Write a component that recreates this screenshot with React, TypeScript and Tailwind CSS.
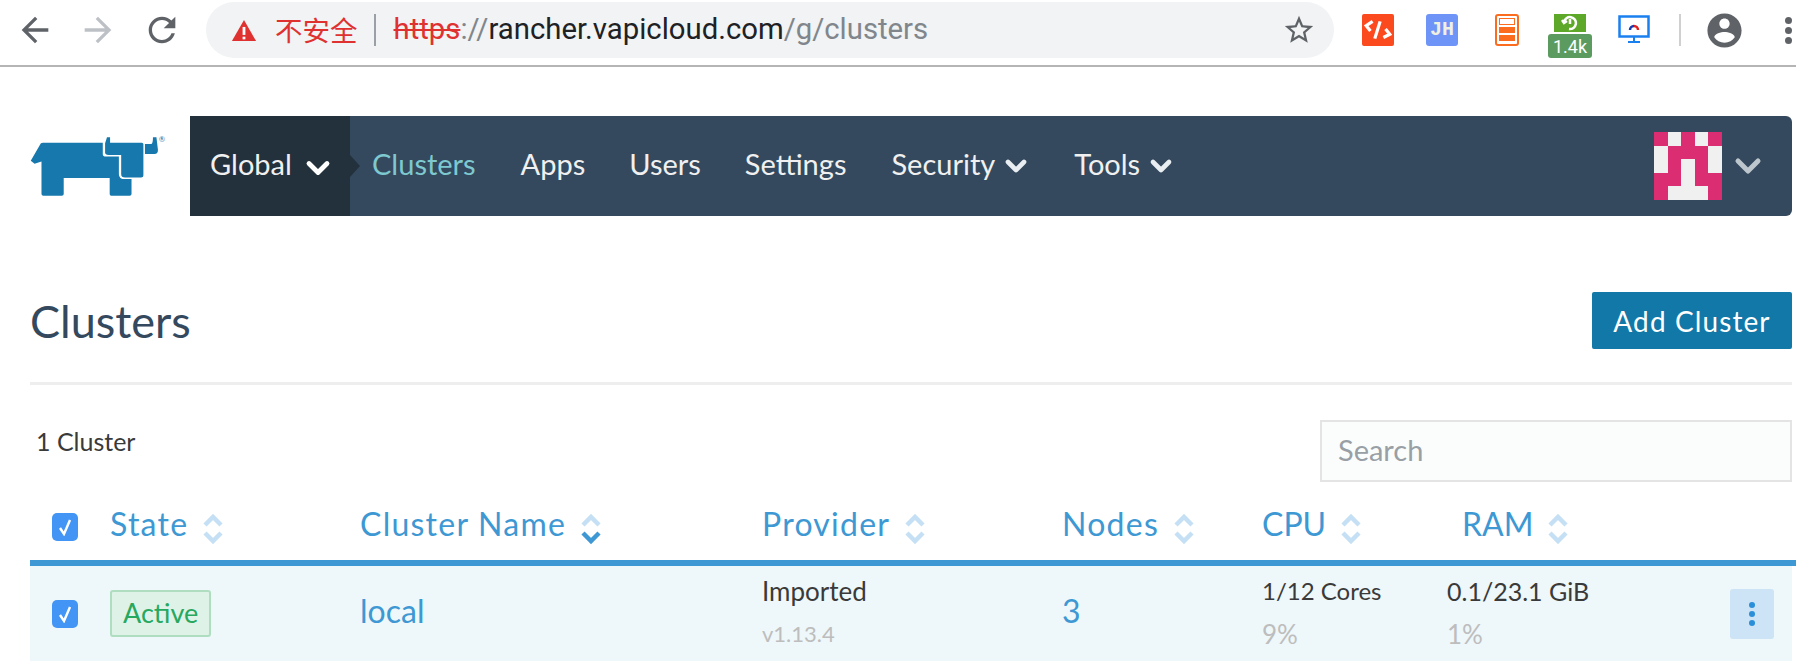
import { ChevronDown } from "lucide-react";

const font = "font-['Lato','Noto_Sans',sans-serif]";

function Sort({ active }: { active?: boolean }) {
  return (
    <svg width="20" height="32" viewBox="0 0 20 32" className="ml-[15px] mt-[3px]" fill="none" strokeWidth="4.5">
      <path d="M2 12 L10 4 L18 12" stroke="#c5e0f4" />
      <path d="M2 20 L10 28 L18 20" stroke={active ? "#3d98d3" : "#c5e0f4"} />
    </svg>
  );
}

function Check() {
  return (
    <div className="flex h-7 w-[26px] items-center justify-center rounded-[5px] bg-[#4295f5]">
      <svg width="15" height="18" viewBox="0 0 15 18" fill="none" stroke="#fff" strokeWidth="2.4">
        <path d="M2 10 L6 16 L12 2" />
      </svg>
    </div>
  );
}

function Head({ label, active, tight }: { label: string; active?: boolean; tight?: boolean }) {
  return (
    <div className={`flex h-[36px] items-center text-[32px] leading-[36px] text-[#3d98d3] ${tight ? "tracking-normal" : "tracking-[1.25px]"}`}>
      <span className="mb-[6px]">{label}</span>
      <Sort active={active} />
    </div>
  );
}

function Rancher() {
  return (
    <svg width="136" height="63" viewBox="80 110 355 190" preserveAspectRatio="none" fill="#1778ad">
      <path d="M82 188 L108 136 Q110 133 114 133 L270 133 L270 168 Q270 175 278 175 L312 175 L312 228 Q312 243 328 243 L345 243 L345 288 Q345 293 340 293 L292 293 Q288 293 288 288 L288 240 L168 240 L168 288 Q168 293 163 293 L115 293 Q110 293 110 288 L110 190 L92 197 Z" />
      <path d="M289 133 L372 133 Q376 133 376 138 L376 232 Q376 238 370 238 L328 238 Q318 238 318 228 L318 170 L285 170 Q276 170 276 163 L276 135 L281 117 L289 117 Z" />
      <path d="M380 137 L397 137 Q401 135 401 117 L410 117 L414 155 Q414 167 405 167 L380 167 Z" />
      <text x="416" y="132" fontSize="20">®</text>
    </svg>
  );
}

const cells = [
  1, 0, 1, 0, 1,
  0, 1, 1, 1, 0,
  0, 1, 0, 1, 0,
  1, 1, 0, 1, 1,
  1, 0, 0, 0, 1,
];

function Avatar() {
  return (
    <svg width="68" height="68" viewBox="0 0 5 5" shapeRendering="crispEdges">
      {cells.map((on, i) => (
        <rect key={i} x={i % 5} y={Math.floor(i / 5)} width="1" height="1" fill={on ? "#db2e72" : "#f0f0f0"} />
      ))}
    </svg>
  );
}

function Toolbar() {
  return (
    <div className="flex h-[67px] items-center border-b-2 border-[#b5b5b5] pb-[5px] font-['Roboto',sans-serif]">
      <svg width="40" height="40" viewBox="0 0 24 24" fill="#5f6368" className="ml-[15px] shrink-0">
        <path d="M20 11H7.83l5.59-5.59L12 4l-8 8 8 8 1.41-1.41L7.83 13H20v-2z" />
      </svg>
      <svg width="40" height="40" viewBox="0 0 24 24" fill="#bdc1c6" className="ml-[23px] shrink-0">
        <path d="M4 13h12.17l-5.59 5.59L12 20l8-8-8-8-1.41 1.41L16.17 11H4v2z" />
      </svg>
      <svg width="40" height="40" viewBox="0 0 24 24" fill="#5f6368" className="ml-[24px] shrink-0">
        <path d="M17.65 6.35C16.2 4.9 14.21 4 12 4c-4.42 0-7.99 3.58-7.99 8s3.57 8 7.99 8c3.73 0 6.84-2.55 7.73-6h-2.08c-.82 2.33-3.04 4-5.65 4-3.31 0-6-2.69-6-6s2.69-6 6-6c1.66 0 3.14.69 4.22 1.78L13 11h7V4l-2.35 2.35z" />
      </svg>
      <div className="ml-[24px] flex h-[56px] w-[1128px] shrink-0 items-center rounded-[28px] bg-[#f1f3f4] pl-[25px] pr-[18px] text-[29.3px]">
        <svg width="26" height="23" viewBox="0 0 28 26" preserveAspectRatio="none">
          <path d="M14 1 L27 25 L1 25 Z" fill="#e03131" />
          <rect x="12.5" y="9" width="3" height="9" fill="#fff" />
          <rect x="12.5" y="20" width="3" height="3" fill="#fff" />
        </svg>
        <span className="ml-[18px] font-['Noto_Sans_CJK_SC',sans-serif] text-[27.5px] text-[#e03131]">不安全</span>
        <span className="ml-[16px] h-[32px] w-[2px] bg-[#9aa0a6]" />
        <span className="ml-[18px] text-[#e03131] line-through">https</span>
        <span className="text-[#80868b]">://</span>
        <span className="text-[#202124]">rancher.vapicloud.com</span>
        <span className="text-[#80868b]">/g/clusters</span>
        <svg width="34" height="34" viewBox="0 0 24 24" fill="#5f6368" className="ml-auto">
          <path d="M22 9.24l-7.19-.62L12 2 9.19 8.63 2 9.24l5.46 4.73L5.82 21 12 17.27 18.18 21l-1.63-7.03L22 9.24zM12 15.4l-3.76 2.27 1-4.28-3.32-2.88 4.38-.38L12 6.1l1.71 4.04 4.38.38-3.32 2.88 1 4.28L12 15.4z" />
        </svg>
      </div>
      <div className="ml-[28px] flex h-8 w-8 shrink-0 items-center justify-center rounded-[2px] bg-[#fc4a1f]">
        <svg width="28" height="24" viewBox="0 0 26 22" fill="none" stroke="#fff" strokeWidth="3">
          <path d="M8 3 L2 7 L6 12 M10 19 L15 3 M20 10 L24 15 L18 18" />
        </svg>
      </div>
      <div className="ml-[32px] flex h-8 w-8 shrink-0 items-center justify-center rounded-[3px] bg-[#6f94f7] font-['Liberation_Mono',monospace] text-[20px] font-bold text-[#f0f0e0]">JH</div>
      <div className="ml-[37px] flex h-8 w-[24px] shrink-0 flex-col gap-[2px] rounded-[3px] border-2 border-[#fb6c1f] p-[2px]">
        <div className="h-[7px] border border-[#fb6c1f]" />
        <div className="h-[6px] bg-[#fb6c1f]" />
        <div className="h-[6px] bg-[#fb6c1f]" />
      </div>
      <div className="ml-[29px] flex w-[44px] shrink-0 flex-col items-center pt-[12px]">
        <div className="flex h-[18px] w-[32px] items-center justify-center bg-[#5ea829]">
          <svg width="18" height="18" viewBox="0 0 18 18" fill="none" stroke="#fff" strokeWidth="2.5">
            <path d="M3 8 A6 6 0 1 1 8 15 M1 6 L3 9 L6 7 M9 5 V10" />
          </svg>
        </div>
        <div className="mt-[2px] flex h-[24px] w-[44px] items-center justify-center rounded-[3px] bg-[#5c9b60] text-[18px] text-white">1.4k</div>
      </div>
      <svg width="32" height="32" viewBox="0 0 32 32" className="ml-[26px] shrink-0">
        <rect x="1.5" y="2.5" width="29" height="20" fill="#fff" stroke="#1a80f0" strokeWidth="2.5" />
        <path d="M12 16 A4 4 0 0 1 16 12" fill="none" stroke="#1a3ab0" strokeWidth="2.5" />
        <path d="M16 12 A4 4 0 0 1 20 16" fill="none" stroke="#e02020" strokeWidth="2.5" />
        <path d="M15 23 H17 V27 H22 V29 H10 V27 H15 Z" fill="#1a80f0" />
      </svg>
      <div className="ml-[29px] h-[32px] w-[2px] shrink-0 bg-[#d0d0d0]" />
      <svg width="41" height="41" viewBox="0 0 24 24" fill="#5f6368" className="ml-[23px] shrink-0">
        <path d="M12 2C6.48 2 2 6.48 2 12s4.48 10 10 10 10-4.48 10-10S17.52 2 12 2zm0 3c1.66 0 3 1.34 3 3s-1.34 3-3 3-3-1.34-3-3 1.34-3 3-3zm0 14.2c-2.5 0-4.71-1.28-6-3.22.03-1.99 4-3.08 6-3.08 1.99 0 5.97 1.09 6 3.08-1.29 1.94-3.5 3.22-6 3.22z" />
      </svg>
      <div className="ml-[40px] flex shrink-0 flex-col gap-[3px]">
        <div className="h-[7px] w-[7px] rounded-full bg-[#5f6368]" />
        <div className="h-[7px] w-[7px] rounded-full bg-[#5f6368]" />
        <div className="h-[7px] w-[7px] rounded-full bg-[#5f6368]" />
      </div>
    </div>
  );
}

function Nav() {
  return (
    <div className="mt-[49px] flex items-center pl-[30px] pr-[4px]">
      <div className="w-[160px] shrink-0">
        <Rancher />
      </div>
      <div className="flex h-[100px] flex-1 items-center rounded-r-[6px] bg-[#34495e] pr-[24px] text-[29px] text-[#f0f0f0]">
        <div className="relative flex h-full w-[160px] items-center bg-[#23313d] pb-[4px] pl-[20px]">
          Global
          <ChevronDown size={36} strokeWidth={3.2} className="ml-[8px] mt-[8px] text-white" />
          <div className="absolute left-full top-[39px] h-0 w-0 border-y-[11px] border-l-[10px] border-y-transparent border-l-[#23313d]" />
        </div>
        <span className="mb-[4px] ml-[22px] text-[#7ec8cf]">Clusters</span>
        <span className="mb-[4px] ml-[45px]">Apps</span>
        <span className="mb-[4px] ml-[44px]">Users</span>
        <span className="mb-[4px] ml-[44px]">Settings</span>
        <span className="mb-[4px] ml-[45px]">Security</span>
        <ChevronDown size={32} strokeWidth={3.5} className="ml-[5px] text-[#e8eef2]" />
        <span className="mb-[4px] ml-[42px]">Tools</span>
        <ChevronDown size={32} strokeWidth={3.5} className="ml-[5px] text-[#e8eef2]" />
        <div className="ml-auto flex items-center gap-[6px]">
          <Avatar />
          <ChevronDown size={40} strokeWidth={3} className="text-[#bcc6cc]" />
        </div>
      </div>
    </div>
  );
}

export default function App() {
  return (
    <div className={`h-[666px] w-[1796px] overflow-hidden bg-white ${font}`}>
      <Toolbar />
      <Nav />
      <div className="pl-[30px] pr-[4px]">
        <div className="mt-[76px] flex h-[93px] items-start justify-between border-b-[3px] border-[#eeeeee]">
          <h1 className="mt-[9px] text-[45px] leading-[40px] text-[#34495e]">Clusters</h1>
          <button className="flex h-[57px] w-[200px] items-center justify-center rounded-[2px] bg-[#1178a8] text-[28px] tracking-[1.1px] text-white">
            Add Cluster
          </button>
        </div>
        <div className="mt-[35px] flex items-start justify-between">
          <div className="ml-[6px] mt-[3px] text-[25px] text-[#3a3a3a]">1 Cluster</div>
          <input
            placeholder="Search"
            className="h-[62px] w-[472px] border-2 border-[#e4e4e4] bg-[#fbfdfc] px-[16px] pb-[3px] text-[29px] placeholder:text-[#98a0a6]"
          />
        </div>
        <div className="mr-[-4px] mt-[27px] grid h-[57px] grid-cols-[80px_250px_402px_300px_200px_200px_1fr] items-center border-b-[6px] border-[#3d98d3] pb-[15px]">
          <div className="pl-[22px]"><Check /></div>
          <Head label="State" />
          <Head label="Cluster Name" active />
          <Head label="Provider" />
          <Head label="Nodes" />
          <Head label="CPU" tight />
          <Head label="RAM" tight />
        </div>
        <div className="grid h-[95px] grid-cols-[80px_250px_402px_300px_200px_200px_1fr] items-center bg-[#eef7f9]">
          <div className="pl-[22px]"><Check /></div>
          <div>
            <span className="inline-block rounded-[3px] border-2 border-[#aeddc0] bg-[#dff2e7] px-[11px] py-[1px] text-[27px] text-[#27a85f]">Active</span>
          </div>
          <div className="pb-[6px] text-[32px] text-[#3d98d3]">local</div>
          <div className="pb-[6px]">
            <div className="text-[26px] leading-[36px] text-[#3a3a3a]">Imported</div>
            <div className="mt-[10px] text-[22px] leading-[30px] text-[#bdbdbd]">v1.13.4</div>
          </div>
          <div className="pb-[6px] text-[32px] text-[#3d98d3]">3</div>
          <div className="pb-[6px]">
            <div className="text-[24px] leading-[36px] text-[#3a3a3a]">1/12 Cores</div>
            <div className="mt-[10px] text-[26px] leading-[30px] text-[#bdbdbd]">9%</div>
          </div>
          <div className="ml-[-15px] flex items-center justify-between pr-[18px]">
            <div className="pb-[6px]">
              <div className="text-[25px] leading-[36px] text-[#3a3a3a]">0.1/23.1 GiB</div>
              <div className="mt-[10px] text-[26px] leading-[30px] text-[#bdbdbd]">1%</div>
            </div>
            <div className="flex h-[50px] w-[44px] flex-col items-center justify-center gap-[3px] rounded-[3px] bg-[#cde3f6]">
              <div className="h-[6px] w-[6px] rounded-full bg-[#2a8fd8]" />
              <div className="h-[6px] w-[6px] rounded-full bg-[#2a8fd8]" />
              <div className="h-[6px] w-[6px] rounded-full bg-[#2a8fd8]" />
            </div>
          </div>
        </div>
      </div>
    </div>
  );
}
